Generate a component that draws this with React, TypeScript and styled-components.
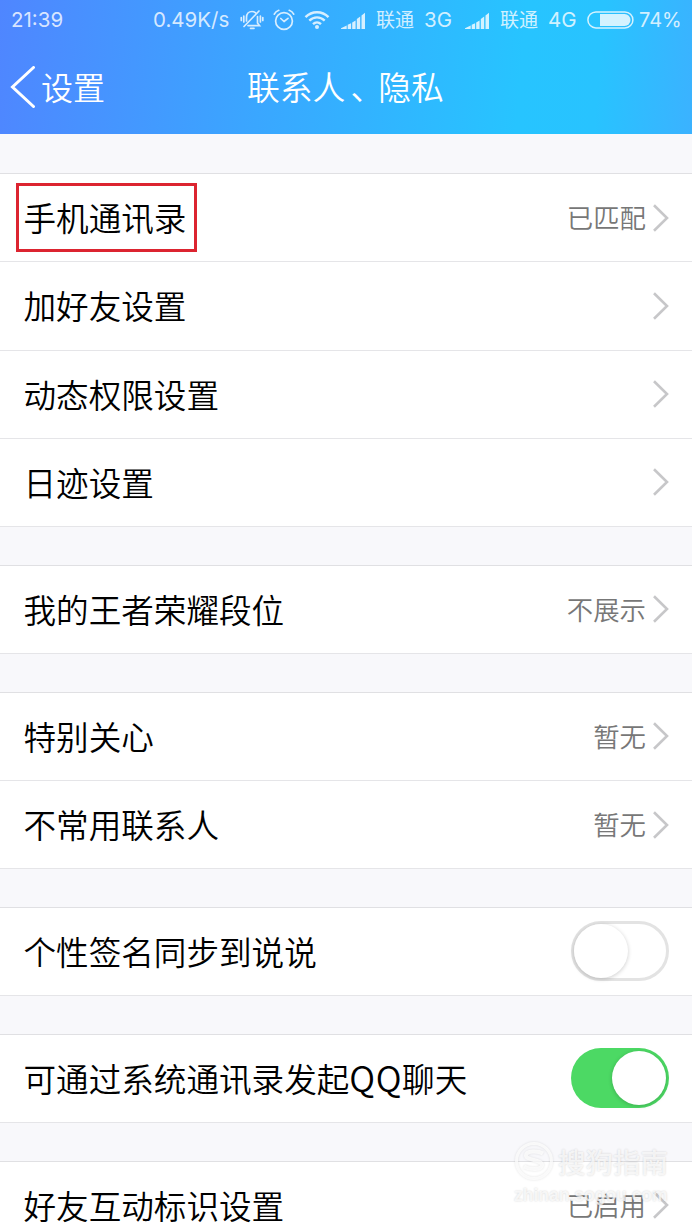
import React from 'react';
import styled, { createGlobalStyle } from 'styled-components';

const GlobalStyle = createGlobalStyle`
  * { box-sizing: border-box; }
  body {
    margin: 0;
    background: #f8f8fb;
    font-family: "Noto Sans CJK SC", sans-serif;
    overflow: hidden;
  }
`;

const Screen = styled.div`
  position: relative;
  width: 692px;
  height: 1230px;
  overflow: hidden;
  background: #f8f8fb;
`;

const Header = styled.header`
  height: 134.4px;
  background: linear-gradient(95deg, #4f86ff 0%, #3ba5ff 36%, #27c4ff 75%, #28c3ff 86%, #3bb2ff 100%);
  color: #fff;
`;

const StatusBar = styled.div`
  display: flex;
  align-items: center;
  height: 40px;
  padding-left: 11px;
  color: rgba(255, 255, 255, 0.8);

  svg { display: block; flex: none; }
`;

const StatusText = styled.span<{ $w: number; $gap?: number; $size?: number }>`
  flex: none;
  width: ${p => p.$w}px;
  margin-left: ${p => p.$gap ?? 0}px;
  font-family: Inter, "Noto Sans CJK SC", sans-serif;
  font-size: ${p => p.$size ?? 20.5}px;
  line-height: 40px;
  white-space: nowrap;
`;

const Carrier = styled(StatusText)`
  padding-top: 1px;
`;

const IconSlot = styled.span<{ $gap: number }>`
  flex: none;
  margin-left: ${p => p.$gap}px;
`;

const NavBar = styled.div`
  display: grid;
  grid-template-columns: 247px 1fr;
  align-items: center;
  height: 94px;
`;

const Back = styled.div`
  display: flex;
  align-items: center;
  padding-left: 10px;
  font-size: 32px;
  font-weight: 350;

  svg { display: block; margin-right: 5px; }
`;

const BackText = styled.span`
  padding-bottom: 3px;
`;

const Title = styled.h1`
  margin: 0;
  padding-bottom: 4px;
  font-size: 32.8px;
  font-weight: 350;
`;

const Comma = styled.span`
  margin: 0 -5px 0 5px;
`;

const List = styled.main`
  padding-top: 38.8px;
`;

const Group = styled.section`
  margin-bottom: 37.8px;
  border-top: 1px solid #e0e0e3;
  background: #fff;
`;

const Row = styled.div`
  display: flex;
  align-items: center;
  height: 88.2px;
  padding: 0 23px 0 23.5px;
  border-bottom: 1px solid #e5e5e8;
`;

const Label = styled.span`
  flex: 1;
  font-size: 32.6px;
  font-weight: 350;
  color: #000;
  white-space: nowrap;
  line-height: 60px;
  padding-bottom: 1px;
`;

const Latin = styled.span`
  font-size: 35px;
  line-height: 1;
  letter-spacing: 0.6px;
`;

const Highlight = styled.span`
  display: inline-block;
  height: 69px;
  margin-left: -7.5px;
  margin-top: 1px;
  padding: 0 7.5px 0 4.5px;
  border: 3px solid #dc2430;
  line-height: 61px;
  vertical-align: middle;
`;

const Value = styled.span`
  margin-right: 7px;
  padding-bottom: 2px;
  font-size: 26.4px;
  font-weight: 350;
  color: #777;
`;

const Toggle = styled.span<{ $on?: boolean }>`
  display: flex;
  align-items: center;
  justify-content: ${p => (p.$on ? 'flex-end' : 'flex-start')};
  width: 98px;
  height: 60px;
  padding: ${p => (p.$on ? '3px' : '0')};
  border: ${p => (p.$on ? 'none' : '3px solid #e3e3e3')};
  border-radius: 30px;
  background: ${p => (p.$on ? '#4cd964' : '#fff')};
`;

const Knob = styled.span`
  width: 54px;
  height: 54px;
  border-radius: 50%;
  background: #fff;
  box-shadow: 0 1px 4px rgba(0, 0, 0, 0.2);
`;

const Watermark = styled.div`
  position: absolute;
  left: 514px;
  top: 1140px;
  width: 160px;
  color: rgba(255, 255, 255, 0.75);
  text-shadow: 0 0 2px rgba(0, 0, 0, 0.18);
`;

const Brand = styled.div`
  display: flex;
  align-items: center;
  gap: 4px;
  height: 42px;
  font-size: 27.5px;
  font-weight: 500;

  svg { display: block; filter: drop-shadow(0 0 1px rgba(0, 0, 0, 0.15)); }
`;

const Site = styled.div`
  font-family: "Liberation Sans", sans-serif;
  font-size: 17.5px;
  font-weight: 700;
  line-height: 26px;
`;

const Mute = () => (
  <svg width="24" height="22" viewBox="0 0 24 22" fill="none" stroke="currentColor" strokeWidth="1.7" strokeLinecap="round">
    <path d="M6.5 12V8.5C6.500 5 8.700 2.500 12 2.500c1.300 0 2.400.4 3.300 1.100M17.500 7.500V14l2 2.600H8M10.500 19.300h3.500M19 2 4 17.500M3.800 7V13M1.300 8.500v3M20.400 7V13M22.800 8.500v3" />
  </svg>
);

const Alarm = () => (
  <svg width="22" height="22" viewBox="0 0 22 22" fill="none" stroke="currentColor" strokeWidth="1.7" strokeLinecap="round" strokeLinejoin="round">
    <circle cx="11" cy="12" r="8.4" />
    <path d="M7.8 9.500 11 12.500l4-3.200M1.300 5.200C2.200 3.400 3.800 2 5.800 1.300M20.700 5.200c-.9-1.800-2.500-3.200-4.500-3.900" />
  </svg>
);

const Wifi = () => (
  <svg width="26" height="20" viewBox="0 0 26 20" fill="none" stroke="currentColor" strokeWidth="2.4">
    <path d="M1.5 7.200C8 .6 18 .6 24.500 7.200M5.300 10.700c4.500-4.400 10.900-4.400 15.400 0M9 14.100c2.400-2.300 5.600-2.300 8 0" />
    <circle cx="13" cy="17" r="2" fill="currentColor" stroke="none" />
  </svg>
);

const Signal = () => (
  <svg width="25" height="17" viewBox="0 0 25 17" fill="currentColor">
    <path d="M0 17v-.8l5.700-2.800V17zM6.700 17v-4.200l3.400-1.600V17zM11.200 17v-6.500l3.400-2V17zM15.800 17V7l3.400-2.500V17zM20.500 17V3.500L24 .8V17z" />
  </svg>
);

const Battery = () => (
  <svg width="47" height="18" viewBox="0 0 47 18" fill="none">
    <rect x="0.9" y="0.9" width="45" height="16" rx="8" stroke="currentColor" strokeWidth="1.5" />
    <path d="M13 3h24.500a6 6 0 0 1 0 12H13z" fill="currentColor" />
  </svg>
);

const Chevron = () => (
  <svg width="16" height="28" viewBox="0 0 16 28" fill="none" stroke="#c7c7c9" strokeWidth="2.6">
    <path d="M1 1.200 14 14 1 26.800" />
  </svg>
);

type Item = { label: React.ReactNode; value?: string; toggle?: boolean; on?: boolean; marked?: boolean };

const groups: Item[][] = [
  [
    { label: '手机通讯录', value: '已匹配', marked: true },
    { label: '加好友设置' },
    { label: '动态权限设置' },
    { label: '日迹设置' },
  ],
  [{ label: '我的王者荣耀段位', value: '不展示' }],
  [
    { label: '特别关心', value: '暂无' },
    { label: '不常用联系人', value: '暂无' },
  ],
  [{ label: '个性签名同步到说说', toggle: true }],
  [{ label: <>可通过系统通讯录发起<Latin>QQ</Latin>聊天</>, toggle: true, on: true }],
  [{ label: '好友互动标识设置', value: '已启用' }],
];

export default function App() {
  return (
    <>
      <GlobalStyle />
      <Screen>
        <Header>
          <StatusBar>
            <StatusText $w={142}>21:39</StatusText>
            <StatusText $w={78}>0.49K/s</StatusText>
            <IconSlot $gap={9}><Mute /></IconSlot>
            <IconSlot $gap={9}><Alarm /></IconSlot>
            <IconSlot $gap={9}><Wifi /></IconSlot>
            <IconSlot $gap={11}><Signal /></IconSlot>
            <Carrier $w={38} $gap={10} $size={19}>联通</Carrier>
            <StatusText $w={30} $gap={10}>3G</StatusText>
            <IconSlot $gap={11}><Signal /></IconSlot>
            <Carrier $w={38} $gap={10} $size={19}>联通</Carrier>
            <StatusText $w={30} $gap={10}>4G</StatusText>
            <IconSlot $gap={9}><Battery /></IconSlot>
            <StatusText $w={42} $gap={5} $size={20}>74%</StatusText>
          </StatusBar>
          <NavBar>
            <Back>
              <svg width="26" height="42" viewBox="0 0 26 42" fill="none" stroke="#fff" strokeWidth="3" strokeLinecap="round">
                <path d="M23.500 1.500 2.500 21l21 19.500" />
              </svg>
              <BackText>设置</BackText>
            </Back>
            <Title>联系人<Comma>、</Comma>隐私</Title>
          </NavBar>
        </Header>
        <List>
          {groups.map((items, i) => (
            <Group key={i}>
              {items.map((item, j) => (
                <Row key={j}>
                  <Label>{item.marked ? <Highlight>{item.label}</Highlight> : item.label}</Label>
                  {item.value && <Value>{item.value}</Value>}
                  {item.toggle ? <Toggle $on={item.on}><Knob /></Toggle> : <Chevron />}
                </Row>
              ))}
            </Group>
          ))}
        </List>
        <Watermark>
          <Brand>
            <svg width="40" height="40" viewBox="0 0 40 40" fill="none" stroke="currentColor" strokeWidth="3">
              <circle cx="20" cy="20" r="17.5" />
              <path d="M29 12.500c-5-3-17-3-17 2 0 5 16 4 16 9.500 0 5-12 5-18 1.500" strokeWidth="4" />
            </svg>
            搜狗指南
          </Brand>
          <Site>zhinan.sogou.com</Site>
        </Watermark>
      </Screen>
    </>
  );
}
